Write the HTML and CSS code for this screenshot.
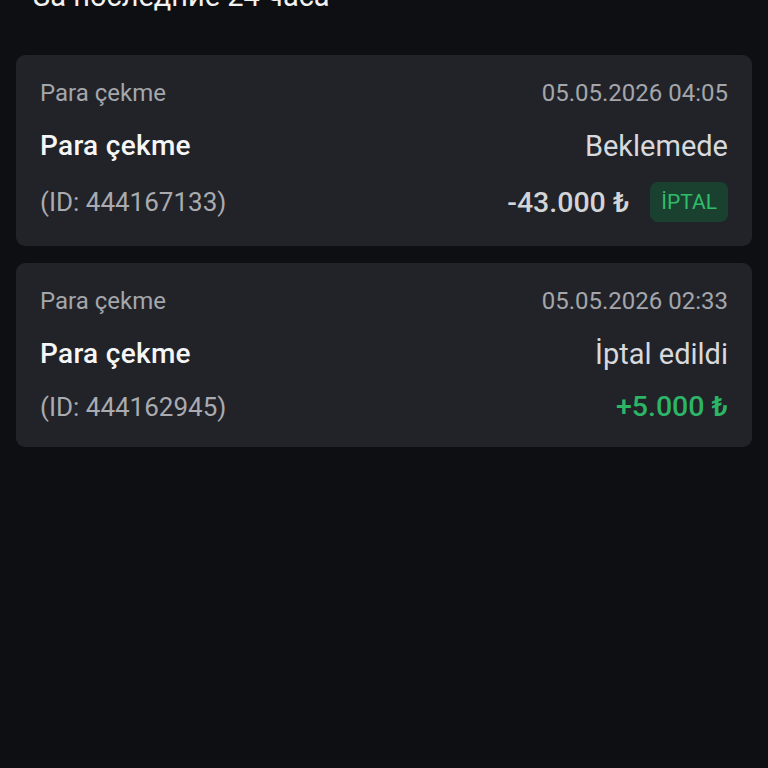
FILE: index.html
```html
<!DOCTYPE html>
<html lang="tr">
<head>
  <meta charset="UTF-8">
  <title>İşlem geçmişi</title>
  <link rel="stylesheet" href="styles.css">
</head>
<body>
  <h2 class="period">За последние 24 часа</h2>

  <div class="history">
    <div class="tx-card">
      <div class="tx-row tx-meta">
        <span>Para çekme</span>
        <span>05.05.2026 04:05</span>
      </div>
      <div class="tx-row tx-main">
        <span class="tx-title">Para çekme</span>
        <span class="tx-status">Beklemede</span>
      </div>
      <div class="tx-row tx-foot">
        <span class="tx-id">(ID: 444167133)</span>
        <div class="tx-right">
          <span class="tx-amount">-43.000 ₺</span>
          <button class="cancel-btn">İPTAL</button>
        </div>
      </div>
    </div>

    <div class="tx-card">
      <div class="tx-row tx-meta">
        <span>Para çekme</span>
        <span>05.05.2026 02:33</span>
      </div>
      <div class="tx-row tx-main">
        <span class="tx-title">Para çekme</span>
        <span class="tx-status">İptal edildi</span>
      </div>
      <div class="tx-row tx-foot">
        <span class="tx-id">(ID: 444162945)</span>
        <span class="tx-amount positive">+5.000 ₺</span>
      </div>
    </div>
  </div>
</body>
</html>
```

FILE: styles.css
```css
/* page */
body {
  margin: 0;
  background-color: #0e0f12;
  font-family: Roboto, "Noto Sans", sans-serif;
  color: #f4f4f5;
}

.period {
  margin: -20px 0 0 33px;
  font-size: 29px;
  font-weight: 400;
  line-height: 32px;
  color: #f2f2f2;
}

/* transaction list */
.history {
  display: flex;
  flex-direction: column;
  gap: 17px;
  padding: 43px 16px 0;
}

.tx-card {
  background-color: #212328;
  border-radius: 9px;
  padding: 24px;
}

.tx-row {
  display: flex;
  justify-content: space-between;
  align-items: center;
}

.tx-meta {
  font-size: 24px;
  line-height: 28px;
  color: #a4a6ab;
}

.tx-main {
  margin-top: 22px;
  font-size: 28px;
  line-height: 34px;
}

.tx-title {
  font-weight: 500;
  letter-spacing: 0.3px;
  color: #f6f6f7;
}

.tx-status {
  font-size: 29px;
  color: #d8d9dc;
}

.tx-foot {
  margin-top: 19px;
  min-height: 32px;
}

.tx-id {
  font-size: 26px;
  color: #a9abb0;
}

.tx-right {
  display: flex;
  align-items: center;
  gap: 21px;
}

.tx-amount {
  font-size: 28.5px;
  font-weight: 500;
  color: #d3d4d7;
}

.tx-amount.positive {
  color: #2db566;
}

.cancel-btn {
  height: 40px;
  padding: 0 11px;
  border: none;
  border-radius: 8px;
  background-color: #1a4130;
  color: #2fbd6a;
  font-family: Roboto, sans-serif;
  font-size: 21px;
}
```
